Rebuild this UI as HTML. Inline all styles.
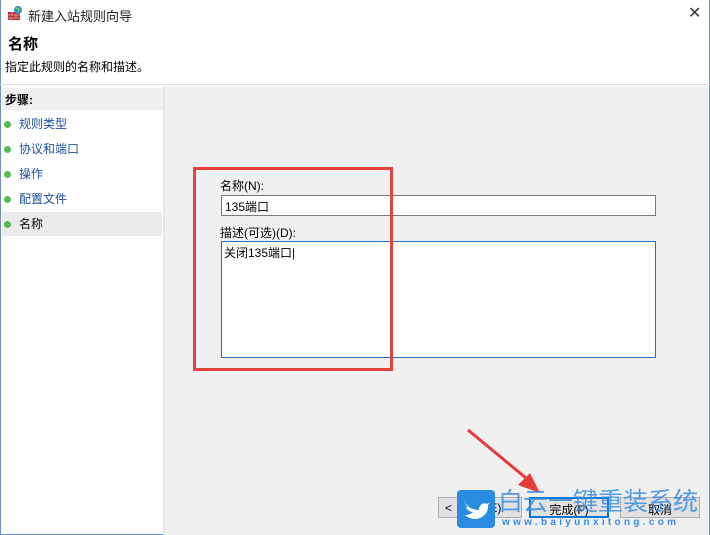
<!DOCTYPE html>
<html><head><meta charset="utf-8"><style>
*{margin:0;padding:0;box-sizing:border-box}
body{width:710px;height:535px;overflow:hidden;background:#fff;font-family:"Liberation Sans","Noto Sans CJK SC",sans-serif;font-size:12px;color:#000;position:relative}
.a{position:absolute;white-space:nowrap}
</style></head><body>
<div class="a" style="left:0;top:0;width:710px;height:535px;border:1px solid #6b8fc4;border-top:none"></div>
<div class="a" style="left:7px;top:5px;width:16px;height:16px">
<svg width="16" height="16"><rect x="1" y="7" width="12" height="8" fill="#a33"/><path d="M1 10h12M1 13h12M5 7v3M9 10v3M4 13v2" stroke="#e88" stroke-width="1"/><circle cx="11" cy="5" r="4" fill="#3a8ad6"/><path d="M9 3l3 1-1 3" stroke="#7c4" stroke-width="1.5" fill="none"/></svg></div>
<div class="a" style="left:28px;top:6px;font-size:13px;color:#222">新建入站规则向导</div>
<div class="a" style="left:688px;top:3px;font-size:16px;color:#333">✕</div>
<div class="a" style="left:8px;top:33px;font-size:15px;font-weight:bold">名称</div>
<div class="a" style="left:5px;top:58px;font-size:12px">指定此规则的名称和描述。</div>
<div class="a" style="left:0;top:84px;width:710px;height:1px;background:#e0e0e0"></div>
<div class="a" style="left:165px;top:86px;width:544px;height:449px;background:#f0f0f0"></div>
<div class="a" style="left:163px;top:86px;width:2px;height:449px;background:#e6e6e6"></div>
<div class="a" style="left:2px;top:88px;width:161px;height:22px;background:#f0f0f0"></div>
<div class="a" style="left:5px;top:91px;font-weight:bold">步骤:</div>
<div class="a" style="left:2px;top:212px;width:160px;height:24px;background:#ebebeb"></div>
<div class="a" style="left:0;top:112px;width:160px;color:#1a4f9c;line-height:25px">
<div style="padding-left:19px;position:relative">规则类型<span class="a" style="left:4px;top:9px;width:7px;height:7px;border-radius:50%;background:#5b5"></span></div>
<div style="padding-left:19px;position:relative">协议和端口<span class="a" style="left:4px;top:9px;width:7px;height:7px;border-radius:50%;background:#5b5"></span></div>
<div style="padding-left:19px;position:relative">操作<span class="a" style="left:4px;top:9px;width:7px;height:7px;border-radius:50%;background:#5b5"></span></div>
<div style="padding-left:19px;position:relative">配置文件<span class="a" style="left:4px;top:9px;width:7px;height:7px;border-radius:50%;background:#5b5"></span></div>
<div style="padding-left:19px;position:relative;color:#000">名称<span class="a" style="left:4px;top:9px;width:7px;height:7px;border-radius:50%;background:#5b5"></span></div>
</div>
<div class="a" style="left:220px;top:177px">名称(N):</div>
<div class="a" style="left:221px;top:195px;width:435px;height:21px;background:#fff;border:1px solid #7a7a7a;padding:2px 3px">135端口</div>
<div class="a" style="left:220px;top:224px">描述(可选)(D):</div>
<div class="a" style="left:221px;top:241px;width:435px;height:117px;background:#fff;border:1px solid #1e73c8;padding:2px 2px">关闭135端口|</div>
<div class="a" style="left:193px;top:167px;width:200px;height:204px;border:3px solid #e5413f"></div>
<div class="a" style="left:438px;top:497px;width:84px;height:21px;border:1px solid #adadad;background:#e1e1e1;padding:3px 6px">&lt;&nbsp;&nbsp;&nbsp;&nbsp;&nbsp;&nbsp;&nbsp;&nbsp;&nbsp;&nbsp;(E)</div>
<div class="a" style="left:529px;top:497px;width:80px;height:21px;border:2px solid #0078d7;background:#e1e1e1;text-align:center;padding-top:2px">完成(F)</div>
<div class="a" style="left:620px;top:497px;width:80px;height:21px;border:1px solid #adadad;background:#e1e1e1;text-align:center;padding-top:3px">取消</div>
<svg class="a" style="left:460px;top:425px" width="90" height="70"><path d="M8 5 L72 58" stroke="#e83a3a" stroke-width="3"/><path d="M58 60 L80 68 L70 48 Z" fill="#e83a3a"/></svg>
<svg class="a" style="left:457px;top:490px" width="38" height="38"><rect width="38" height="38" rx="4" fill="#2a8ce0"/><path d="M8 14c4 4 9 6 14 6 0-5 4-8 8-6l3-2-2 3c1 7-5 14-13 14-4 0-8-2-10-4 3 0 6-1 8-3-3 0-6-2-7-5 1 0 2 0 3-1-3-1-5-3-4-6z" fill="#fff"/></svg>
<div class="a" style="left:498px;top:488px;font-size:25px;line-height:28px;color:#3a8ee0;letter-spacing:0;opacity:.85">白云一键重装系统</div>
<div class="a" style="left:502px;top:517px;font-size:10px;color:#3a8ee0;letter-spacing:3.3px;font-weight:bold">www.baiyunxitong.com</div>
</body></html>
